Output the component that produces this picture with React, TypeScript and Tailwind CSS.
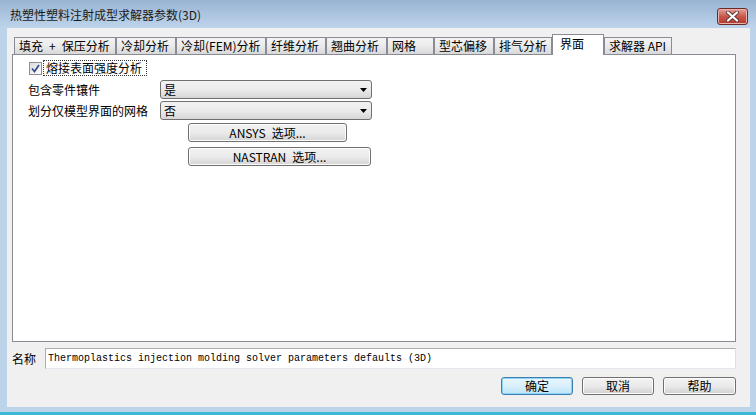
import React from "react";

const tabs: { label: string; w: string; selected?: boolean }[] = [
  { label: "填充\u2002+\u2002保压分析", w: "w-[102px]" },
  { label: "冷却分析", w: "w-[60px]" },
  { label: "冷却(FEM)分析", w: "w-[90px]" },
  { label: "纤维分析", w: "w-[60px]" },
  { label: "翘曲分析", w: "w-[61px]" },
  { label: "网格", w: "w-[47px]" },
  { label: "型芯偏移", w: "w-[60px]" },
  { label: "排气分析", w: "w-[58px]" },
  { label: "界面", w: "w-[52px]", selected: true },
  { label: "求解器 API", w: "w-[68px]" },
];

function Tab({ label, w, selected }: { label: string; w: string; selected?: boolean }) {
  if (selected) {
    return (
      <div
        className={`${w} relative z-10 mb-[-1px] h-[21px] shrink-0 border border-b-0 border-[#898c95] bg-white pl-[7px] pt-[1px] text-[12px] leading-[16px] text-black`}
      >
        {label}
      </div>
    );
  }
  return (
    <div
      className={`${w} h-[17px] shrink-0 overflow-hidden whitespace-nowrap border border-b-0 border-[#898c95] bg-gradient-to-b from-[#f3f3f3] via-[#ebebeb] to-[#d8d8d8] pl-[4px] text-[12px] leading-[16px] text-black`}
    >
      {label}
    </div>
  );
}

function Combo({ value }: { value: string }) {
  return (
    <div className="flex h-[19px] w-[212px] items-center justify-between rounded-[3px] border border-[#707070] bg-gradient-to-b from-[#f2f2f2] via-[#ebebeb] to-[#d6d6d6] pl-[3px] pr-[4px] text-[12px] leading-[16px] text-black">
      <span>{value}</span>
      <svg width="7" height="4" viewBox="0 0 7 4">
        <path d="M0 0 H7 L3.5 4 Z" fill="#000" />
      </svg>
    </div>
  );
}

function WinButton({ children, w, isDefault }: { children: React.ReactNode; w: string; isDefault?: boolean }) {
  if (isDefault) {
    return (
      <div
        className={`${w} flex h-[18px] items-center justify-center rounded-[3px] border border-[#3c7fb1] bg-gradient-to-b from-[#eaf6fd] via-[#d9f0fc] to-[#bde4f8] text-[12px] leading-[16px] text-black shadow-[inset_0_0_0_1px_#8fd3f4]`}
      >
        {children}
      </div>
    );
  }
  return (
    <div
      className={`${w} flex h-[18px] items-center justify-center rounded-[3px] border border-[#707070] bg-gradient-to-b from-[#f2f2f2] via-[#ebebeb] to-[#cfcfcf] text-[12px] leading-[16px] text-black shadow-[inset_0_0_0_1px_#fcfcfc]`}
    >
      {children}
    </div>
  );
}

function PanelButton({ children, w }: { children: React.ReactNode; w: string }) {
  return (
    <div
      className={`${w} flex h-[19px] items-center justify-center rounded-[3px] border border-[#707070] bg-gradient-to-b from-[#f2f2f2] via-[#ebebeb] to-[#d4d4d4] text-[12px] leading-[16px] text-black shadow-[inset_0_0_0_1px_#fcfcfc]`}
    >
      {children}
    </div>
  );
}

export default function App() {
  return (
    <div className="flex h-[415px] w-[756px] flex-col overflow-hidden bg-[#bdd3ea] font-['Noto_Sans_CJK_SC',sans-serif]">
      {/* Title bar */}
      <div className="flex h-[28px] shrink-0 items-start justify-between bg-gradient-to-b from-[#98b4d2] to-[#bed4ec] pl-[10px] pr-[8px]">
        <div className="pt-[7px] text-[12px] leading-[16px] text-[#1a1a1a]">热塑性塑料注射成型求解器参数(3D)</div>
        <div className="mt-[8px] flex h-[17px] w-[31px] items-center justify-center rounded-[3px] border border-[#6e2a26] bg-gradient-to-b from-[#e3a199] via-[#c9564a] to-[#b3392c] shadow-[inset_0_0_0_1px_#e8b2aa]">
          <svg width="13" height="11" viewBox="0 0 13 11">
            <path d="M2 1.5 L11 9.5 M11 1.5 L2 9.5" stroke="#5a3a38" strokeWidth="4" strokeLinecap="round" />
            <path d="M2 1.5 L11 9.5 M11 1.5 L2 9.5" stroke="#ffffff" strokeWidth="2.2" strokeLinecap="round" />
          </svg>
        </div>
      </div>

      {/* Body */}
      <div className="ml-[7px] mr-[6px] flex h-[379px] shrink-0 flex-col bg-[#f0f0f0] pl-[5px] pr-[14px]">
        {/* Tabs row */}
        <div className="mt-[6px] flex h-[20px] items-end pl-[2px]">
          {tabs.map((t) => (
            <Tab key={t.label} label={t.label} w={t.w} selected={t.selected} />
          ))}
        </div>

        {/* Panel */}
        <div className="flex h-[288px] flex-col border border-[#898c95] bg-white text-[12px] leading-[16px] text-black">
          {/* checkbox row */}
          <div className="mt-[5px] flex h-[16px] items-center pl-[16px]">
            <div className="flex h-[13px] w-[13px] items-center justify-center border border-[#8e8f8f] bg-gradient-to-br from-[#dcdcdc] to-[#ffffff]">
              <svg width="9" height="9" viewBox="0 0 9 9">
                <path d="M1 4.5 L3.5 7.5 L8 1" stroke="#3b4f8c" strokeWidth="1.8" fill="none" />
              </svg>
            </div>
            <div className="ml-[1px] h-[16px] w-[104px] border border-dotted border-[#333] pl-[2px] leading-[14px]">
              熔接表面强度分析
            </div>
          </div>

          {/* combo rows */}
          <div className="mt-[4px] flex h-[19px] items-center pl-[15px]">
            <div className="w-[132px]">包含零件镶件</div>
            <Combo value="是" />
          </div>
          <div className="mt-[2px] flex h-[19px] items-center pl-[15px]">
            <div className="w-[132px]">划分仅模型界面的网格</div>
            <Combo value="否" />
          </div>

          <div className="mt-[3px] flex pl-[175px]">
            <PanelButton w="w-[159px]">ANSYS{"\u2002"}选项...</PanelButton>
          </div>
          <div className="mt-[5px] flex pl-[175px]">
            <PanelButton w="w-[183px]">NASTRAN{"\u2002"}选项...</PanelButton>
          </div>
        </div>

        {/* Name row */}
        <div className="mt-[6px] flex h-[21px] items-center">
          <div className="w-[33px] text-[12px] leading-[16px] text-black">名称</div>
          <div className="flex h-[21px] flex-1 items-center border border-[#abadb3] border-b-[#e3e9ef] border-r-[#dbdfe6] bg-white pl-[2px] font-['Liberation_Mono',monospace] text-[10px] leading-[14px] text-black">
            Thermoplastics injection molding solver parameters defaults (3D)
          </div>
        </div>

        {/* Buttons row */}
        <div className="mt-[8px] flex justify-end gap-[9px]">
          <WinButton w="w-[72px]" isDefault>
            确定
          </WinButton>
          <WinButton w="w-[72px]">取消</WinButton>
          <WinButton w="w-[73px]">帮助</WinButton>
        </div>
      </div>

      {/* bottom frame */}
      <div className="h-[5px] shrink-0 bg-[#bdd3ea]" />
      <div className="h-[3px] shrink-0 bg-[#3bb8d4]" />
    </div>
  );
}
